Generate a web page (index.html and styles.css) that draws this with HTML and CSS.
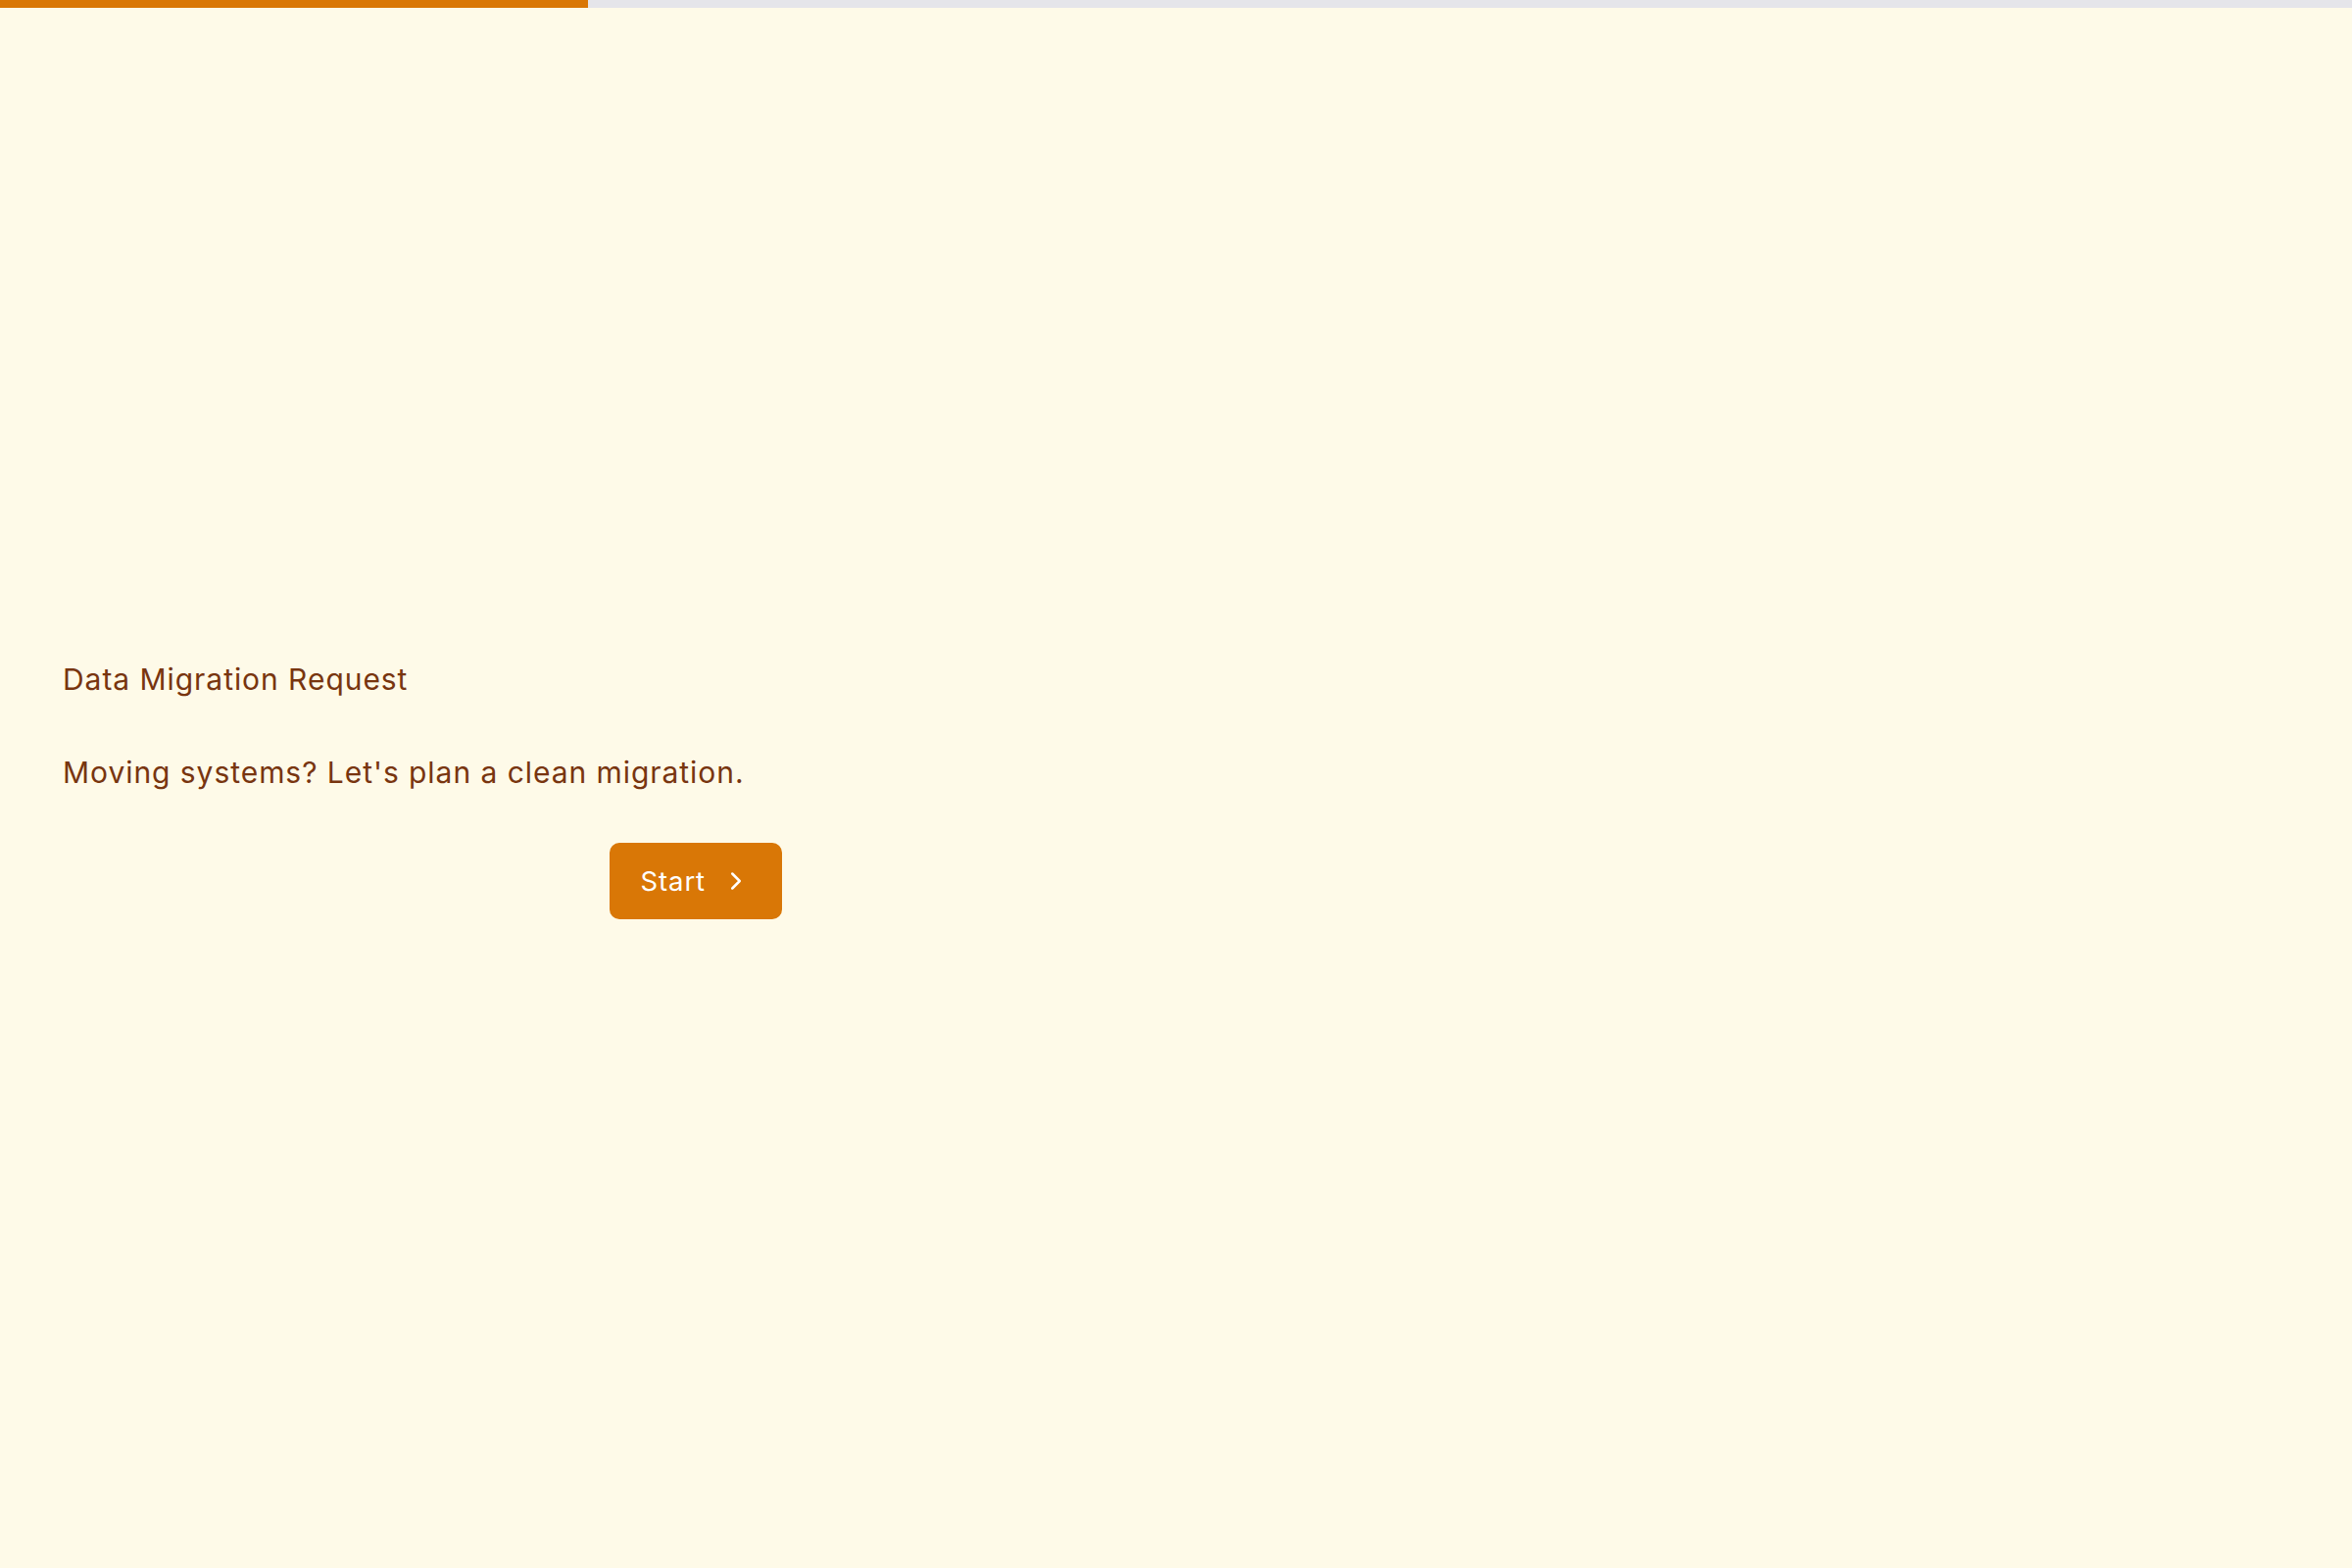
FILE: index.html
```html
<!DOCTYPE html>
<html lang="en">
<head>
<meta charset="utf-8">
<title>Data Migration Request</title>
<link rel="stylesheet" href="styles.css">
</head>
<body>
<div class="progress"><div class="progress-fill" style="width: 25%"></div></div>
<main class="stage">
  <section class="intro">
    <h1 class="title">Data Migration Request</h1>
    <p class="lead">Moving systems? Let's plan a clean migration.</p>
    <div class="actions">
      <button class="btn-start" type="button">
        <span>Start</span>
        <svg class="chev" viewBox="0 0 24 24" fill="none" stroke="currentColor" stroke-width="2" stroke-linecap="round" stroke-linejoin="round"><path d="m9 18 6-6-6-6"/></svg>
      </button>
    </div>
  </section>
</main>
</body>
</html>
```

FILE: styles.css
```css
* { box-sizing: border-box; }
html, body { margin: 0; padding: 0; }
body {
  background: #fefae8;
  font-family: Inter, "Noto Sans", sans-serif;
  letter-spacing: 0.95px;
  color: #78350f;
  min-height: 100vh;
  display: flex;
  flex-direction: column;
}
.progress {
  height: 8px;
  background: #e5e5ea;
  flex: none;
}
.progress-fill {
  height: 100%;
  background: #d97706;
}
.stage {
  flex: 1;
  display: flex;
  align-items: center;
  padding: 0 64px;
}
.intro {
  width: 734px;
  display: flex;
  flex-direction: column;
}
.title {
  margin: 0;
  font-size: 30px;
  line-height: 45px;
  font-weight: 400;
}
.lead {
  margin: 50px 0 0;
  font-size: 30px;
  line-height: 45px;
}
.actions {
  margin-top: 49px;
  display: flex;
  justify-content: flex-end;
}
.btn-start {
  display: flex;
  align-items: center;
  gap: 16px;
  height: 78px;
  padding: 0 32px;
  border: none;
  border-radius: 10px;
  background: #d97706;
  color: #ffffff;
  font-family: Inter, "Noto Sans", sans-serif;
  letter-spacing: 0.9px;
  font-size: 27.5px;
  cursor: pointer;
}
.chev { width: 30px; height: 30px; }
```
